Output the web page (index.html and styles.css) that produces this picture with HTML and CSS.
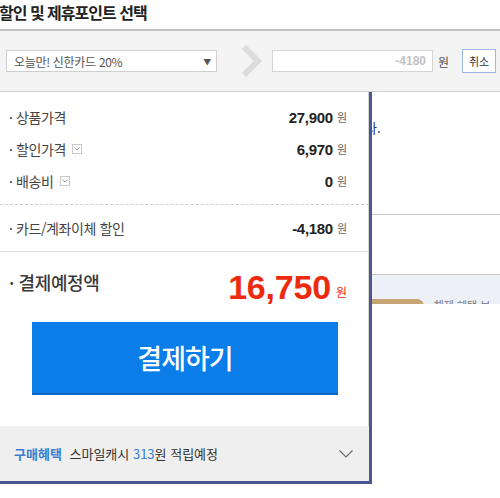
FILE: index.html
```html
<!DOCTYPE html>
<html lang="ko">
<head>
<meta charset="utf-8">
<title>할인 및 제휴포인트 선택</title>
<link rel="stylesheet" href="styles.css">
</head>
<body>
<div class="page">
  <header class="head"><h2 class="title">할인 및 제휴포인트 선택</h2></header>
  <section class="choose">
    <div class="select"><span>오늘만! 신한카드 20%</span><span class="caret">▼</span></div>
    <svg class="arrow" width="22" height="32" viewBox="0 0 22 32"><polyline points="4,2 18,16 4,30" fill="none" stroke="#dcdcdc" stroke-width="6"/></svg>
    <div class="amount">-4180</div>
    <span class="won-s">원</span>
    <button class="cancel">취소</button>
  </section>
  <div class="under">
    <div class="note"><span class="note-t">다.</span></div>
    <div class="blank"></div>
    <div class="band">
      <div class="band-in"><span class="tag"></span><span class="band-text">해제 혜택 보기</span></div>
    </div>
  </div>

  <div class="panel">
    <div class="rows">
      <div class="row"><span class="lbl">· 상품가격</span><span class="val"><b>27,900</b><i>원</i></span></div>
      <div class="row"><span class="lbl">· 할인가격 <span class="mini"><svg width="6" height="4" viewBox="0 0 6 4"><polyline points="0.5,0.5 3,3 5.5,0.5" fill="none" stroke="#999" stroke-width="1"/></svg></span></span><span class="val"><b>6,970</b><i>원</i></span></div>
      <div class="row"><span class="lbl">· 배송비 <span class="mini"><svg width="6" height="4" viewBox="0 0 6 4"><polyline points="0.5,0.5 3,3 5.5,0.5" fill="none" stroke="#999" stroke-width="1"/></svg></span></span><span class="val"><b>0</b><i>원</i></span></div>
    </div>
    <div class="row card"><span class="lbl">· 카드/계좌이체 할인</span><span class="val"><b>-4,180</b><i>원</i></span></div>
    <div class="total">
      <span class="tlbl">· 결제예정액</span>
      <span class="tval"><b>16,750</b><i>원</i></span>
    </div>
    <button class="pay">결제하기</button>
    <div class="foot">
      <span><b class="benefit">구매혜택</b> 스마일캐시 <em>313</em>원 적립예정</span>
      <svg width="14" height="8" viewBox="0 0 14 8"><polyline points="0.5,0.5 7,7 13.5,0.5" fill="none" stroke="#666" stroke-width="1.1"/></svg>
    </div>
  </div>
</div>
</body>
</html>
```
FILE: styles.css
```css
* { box-sizing: border-box; }
html, body { margin: 0; padding: 0; }
body {
  width: 500px;
  height: 498px;
  overflow: hidden;
  background: #fff;
  font-family: "Noto Sans CJK KR", "Noto Sans", sans-serif;
  color: #333;
}
.page { position: relative; width: 500px; height: 498px; overflow: hidden; }

.head {
  height: 31px;
  border-bottom: 2px solid #c2c2c2;
}
.title {
  margin: 0 0 0 -1px;
  font-size: 16px;
  line-height: 25px;
  font-weight: 700;
  letter-spacing: -1px;
  color: #222;
}

.choose {
  height: 61px;
  background: #f4f4f4;
  border-bottom: 1px solid #cfcfcf;
  display: flex;
  align-items: center;
  padding-left: 6px;
}
.select {
  width: 211px;
  height: 22px;
  border: 1px solid #cfcfcf;
  background: #fff;
  display: flex;
  align-items: center;
  justify-content: space-between;
  padding: 0 5px 0 7px;
  font-size: 12px;
  letter-spacing: -0.3px;
  color: #555;
}
.caret { font-size: 8px; color: #555; }
.arrow { margin-left: 23px; }
.amount {
  margin-left: 10px;
  width: 161px;
  height: 22px;
  border: 1px solid #d4d4d4;
  background: #fff;
  font-family: "Liberation Sans", sans-serif;
  font-size: 12px;
  font-weight: 700;
  color: #c2c2c2;
  text-align: right;
  line-height: 20px;
  padding-right: 6px;
}
.won-s { margin-left: 5px; font-size: 12px; color: #555; }
.cancel {
  margin-left: 13px;
  width: 34px;
  height: 24px;
  border: 1px solid #9fb7e6;
  background: #fff;
  font-family: "Noto Sans CJK KR", sans-serif;
  font-size: 11px;
  color: #333;
  padding: 0;
}

.under { display: flex; flex-direction: column; }
.note {
  height: 122px;
  margin-left: 369px;
  width: 131px;
  overflow: hidden;
  padding-top: 26px;
  font-size: 13px;
  color: #2b3673;
  white-space: nowrap;
}
.note-t { display: inline-block; margin-left: -4px; }
.blank {
  height: 61px;
  border-top: 1px solid #c6c6c6;
  border-bottom: 1px solid #c6c6c6;
}
.band {
  height: 29px;
  background: #eef0f7;
  overflow: hidden;
}
.band-in {
  display: flex;
  align-items: flex-start;
  padding-top: 24px;
}
.tag {
  width: 427px;
  height: 14px;
  background: #c7a475;
  border-radius: 0 7px 0 0;
}
.band-text { margin-left: 10px; font-size: 11px; color: #777; line-height: 12px; }

.panel {
  position: absolute;
  left: 0;
  top: 92px;
  width: 372px;
  background: #fff;
  border-right: 3px solid #4a5792;
  border-bottom: 3px solid #4a5792;
  box-shadow: inset -1px 0 0 #d6d6d6;
}
.rows {
  padding: 9px 0 7px;
  border-bottom: 1px dashed #cfcfcf;
}
.row {
  height: 32px;
  display: flex;
  align-items: center;
  justify-content: space-between;
  padding: 0 22px 0 9px;
}
.lbl {
  font-size: 14px;
  letter-spacing: -0.4px;
  color: #444;
  display: flex;
  align-items: center;
  white-space: pre;
}
.mini {
  display: inline-flex;
  align-items: center;
  justify-content: center;
  width: 10px;
  height: 10px;
  border: 1px solid #c9c9c9;
  margin-left: 3px;
}
.val { display: flex; align-items: center; }
.val b {
  font-family: "Liberation Sans", sans-serif;
  font-size: 15px;
  font-weight: 700;
  color: #222;
  letter-spacing: -0.3px;
}
.val i {
  font-style: normal;
  font-size: 11px;
  color: #666;
  margin-left: 4px;
}
.row.card {
  height: 47px;
  border-bottom: 1px solid #dcdcdc;
}
.total {
  height: 38px;
  margin-top: 16px;
  display: flex;
  align-items: center;
  justify-content: space-between;
  padding: 0 22px 0 9px;
}
.tlbl {
  font-size: 18px;
  font-weight: 500;
  letter-spacing: -0.4px;
  color: #3a3a3a;
  margin-bottom: 10px;
  white-space: pre;
}
.tval { display: flex; align-items: center; color: #ee2a0e; }
.tval b {
  font-family: "Liberation Sans", sans-serif;
  font-size: 34px;
  font-weight: 700;
  letter-spacing: -0.2px;
}
.tval i {
  font-style: normal;
  font-size: 12px;
  margin-left: 5px;
  margin-top: 8px;
}
.pay {
  display: block;
  margin: 16px 0 0 32px;
  width: 306px;
  height: 73px;
  border: 0;
  border-bottom: 2px solid #0565c4;
  background: #0a7de8;
  color: #fff;
  font-family: "Noto Sans CJK KR", sans-serif;
  font-size: 27px;
  font-weight: 500;
  letter-spacing: -1px;
  padding: 0;
}
.foot {
  margin-top: 31px;
  height: 55px;
  background: #efefef;
  display: flex;
  align-items: center;
  justify-content: space-between;
  padding: 0 16px 0 14px;
  font-size: 13px;
  color: #333;
}
.benefit { color: #3a80d2; font-weight: 700; margin-right: 4px; }
.foot em { font-style: normal; color: #3a80d2; }
```
